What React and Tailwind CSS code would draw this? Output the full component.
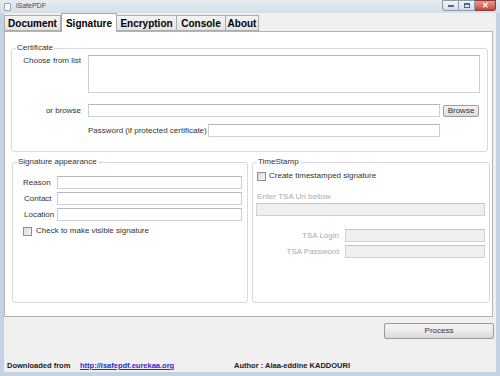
import clsx from 'clsx'

function Field({ className, disabled }) {
  return (
    <div
      className={clsx(
        'h-[13px] border border-[#cdd1d5] border-t-[#b4b8bd]',
        disabled ? 'bg-[#efefef] border-[#d2d2d2] border-t-[#c4c4c4]' : 'bg-white',
        className
      )}
    />
  )
}

function CheckBox() {
  return <div className="w-[9px] h-[9px] border border-[#8e8f8f] bg-gradient-to-br from-[#dcdcdc] to-[#f6f6f6] shrink-0" />
}

function Group({ title, className, children }) {
  return (
    <fieldset className={clsx('border border-[#dadada] rounded-[3px]', className)}>
      <legend className="ml-[4px] px-[1px] text-[8px] leading-[10px] text-[#333]">{title}</legend>
      {children}
    </fieldset>
  )
}

function TitleBar() {
  return (
    <div className="h-[13px] flex items-center bg-gradient-to-b from-[#e6ebf1] to-[#d6e0ea] shrink-0">
      <div className="ml-[4px] w-[7px] h-[8px] bg-white border border-[#9aa4b0] rounded-[1px]" />
      <span className="ml-[5px] text-[7px] text-[#4a4a4a]">iSafePDF</span>
      <div className="ml-auto mr-[4px] flex h-[12px] self-start">
        <div className="w-[17px] h-[11px] border border-[#8a9aab] rounded-bl-[3px] bg-gradient-to-b from-[#f2f5f8] to-[#d3dde8] flex items-center justify-center">
          <div className="w-[6px] h-[2px] bg-white border border-[#596878]" />
        </div>
        <div className="w-[16px] h-[11px] border border-l-0 border-[#8a9aab] bg-gradient-to-b from-[#f2f5f8] to-[#d3dde8] flex items-center justify-center">
          <div className="w-[6px] h-[5px] border border-[#596878] border-t-2" />
        </div>
        <div className="w-[21px] h-[11px] border border-l-0 border-[#8b3a32] rounded-br-[3px] bg-gradient-to-b from-[#e39c90] to-[#c6463a] flex items-center justify-center text-white text-[8px] font-bold leading-none">
          ✕
        </div>
      </div>
    </div>
  )
}

const tabs = [
  { name: 'Document', w: 'w-[57px]' },
  { name: 'Signature', w: 'w-[56px]', active: true },
  { name: 'Encryption', w: 'w-[61px]' },
  { name: 'Console', w: 'w-[50px]' },
  { name: 'About', w: 'w-[34px]' },
]

function Tabs() {
  return (
    <div className="h-[18px] flex items-end shrink-0">
      {tabs.map((t) =>
        t.active ? (
          <div
            key={t.name}
            className={clsx(t.w, 'h-[19px] -mb-px z-10 bg-white border border-b-0 border-[#a8a8a8] flex items-center justify-center text-[10px] font-bold text-black')}
          >
            {t.name}
          </div>
        ) : (
          <div
            key={t.name}
            className={clsx(t.w, 'h-[16px] -ml-px first:ml-0 bg-gradient-to-b from-[#f3f3f3] to-[#e4e4e4] border border-[#acacac] flex items-center justify-center text-[10px] font-bold text-black')}
          >
            {t.name}
          </div>
        )
      )}
    </div>
  )
}

export default function App() {
  return (
    <div className="w-[500px] h-[376px] flex flex-col bg-[#c3d3e3] font-['Liberation_Sans',Arial,sans-serif] overflow-hidden">
      <TitleBar />
      <div className="flex-1 flex flex-col mx-[4px] mb-[4px] bg-[#f0f0f0]">
        <Tabs />
        <div className="h-[286px] mr-[3px] bg-white border border-[#b4b4b4] flex flex-col text-[8px] text-[#333]">
          <Group title="Certificate" className="mt-[11px] ml-[6px] w-[477px] pb-[14px]">
            <div className="mt-[2px] flex items-start">
              <div className="w-[69px] text-right leading-[10px] pt-[1px]">Choose from list</div>
              <div className="ml-[7px] w-[392px] h-[38px] border border-[#cdd1d5] border-t-[#b4b8bd] bg-white" />
            </div>
            <div className="mt-[11px] flex items-center">
              <div className="w-[69px] text-right leading-[10px]">or browse</div>
              <Field className="ml-[7px] w-[352px]" />
              <div className="ml-[3px] w-[36px] h-[12px] border border-[#9c9c9c] rounded-[2px] bg-gradient-to-b from-[#f4f4f4] to-[#dcdcdc] flex items-center justify-center leading-none">
                Browse
              </div>
            </div>
            <div className="mt-[7px] flex items-center">
              <div className="ml-[76px] w-[120px] leading-[10px]">Password (if protected certificate)</div>
              <Field className="w-[232px]" />
            </div>
          </Group>

          <div className="mt-[5px] ml-[7px] flex gap-[4px]">
            <Group title="Signature appearance" className="w-[236px] h-[146px]">
              <div className="mt-[9px] flex items-center">
                <div className="w-[44px] pl-[10px] leading-[10px]">Reason</div>
                <Field className="w-[185px]" />
              </div>
              <div className="mt-[3px] flex items-center">
                <div className="w-[44px] pl-[11px] leading-[10px]">Contact</div>
                <Field className="w-[185px]" />
              </div>
              <div className="mt-[3px] flex items-center">
                <div className="w-[44px] pl-[11px] leading-[10px]">Location</div>
                <Field className="w-[185px]" />
              </div>
              <div className="mt-[5px] pl-[10px] flex items-center">
                <CheckBox />
                <span className="ml-[4px] leading-[10px]">Check to make visible signature</span>
              </div>
            </Group>

            <Group title="TimeStamp" className="w-[238px] h-[146px]">
              <div className="mt-[4px] pl-[4px] flex items-center">
                <CheckBox />
                <span className="ml-[3px] leading-[10px]">Create timestamped signature</span>
              </div>
              <div className="mt-[11px] pl-[4px] leading-[10px] text-[#ababab]">Enter TSA Url bellow</div>
              <Field disabled className="mt-[1px] ml-[3px] w-[229px]" />
              <div className="mt-[13px] flex items-center">
                <div className="w-[86px] text-right leading-[10px] text-[#ababab]">TSA Login</div>
                <Field disabled className="ml-[6px] w-[140px]" />
              </div>
              <div className="mt-[3px] flex items-center">
                <div className="w-[86px] text-right leading-[10px] text-[#ababab]">TSA Password</div>
                <Field disabled className="ml-[6px] w-[140px]" />
              </div>
            </Group>
          </div>
        </div>

        <div className="mt-[6px] mr-[2px] self-end w-[110px] h-[16px] border border-[#9a9a9a] rounded-[2px] bg-gradient-to-b from-[#f5f5f5] via-[#ebebeb] to-[#d9d9d9] flex items-center justify-center text-[8px] text-[#333]">
          Process
        </div>

        <div className="mt-[22px] flex items-center text-[7.5px] leading-[10px] font-bold text-[#1a1a1a]">
          <span className="pl-[3px] w-[76px]">Downloaded from</span>
          <span className="w-[154px] text-[#2d2dc8] underline">http://isafepdf.eurekaa.org</span>
          <span>Author : Alaa-eddine KADDOURI</span>
        </div>
      </div>
    </div>
  )
}
